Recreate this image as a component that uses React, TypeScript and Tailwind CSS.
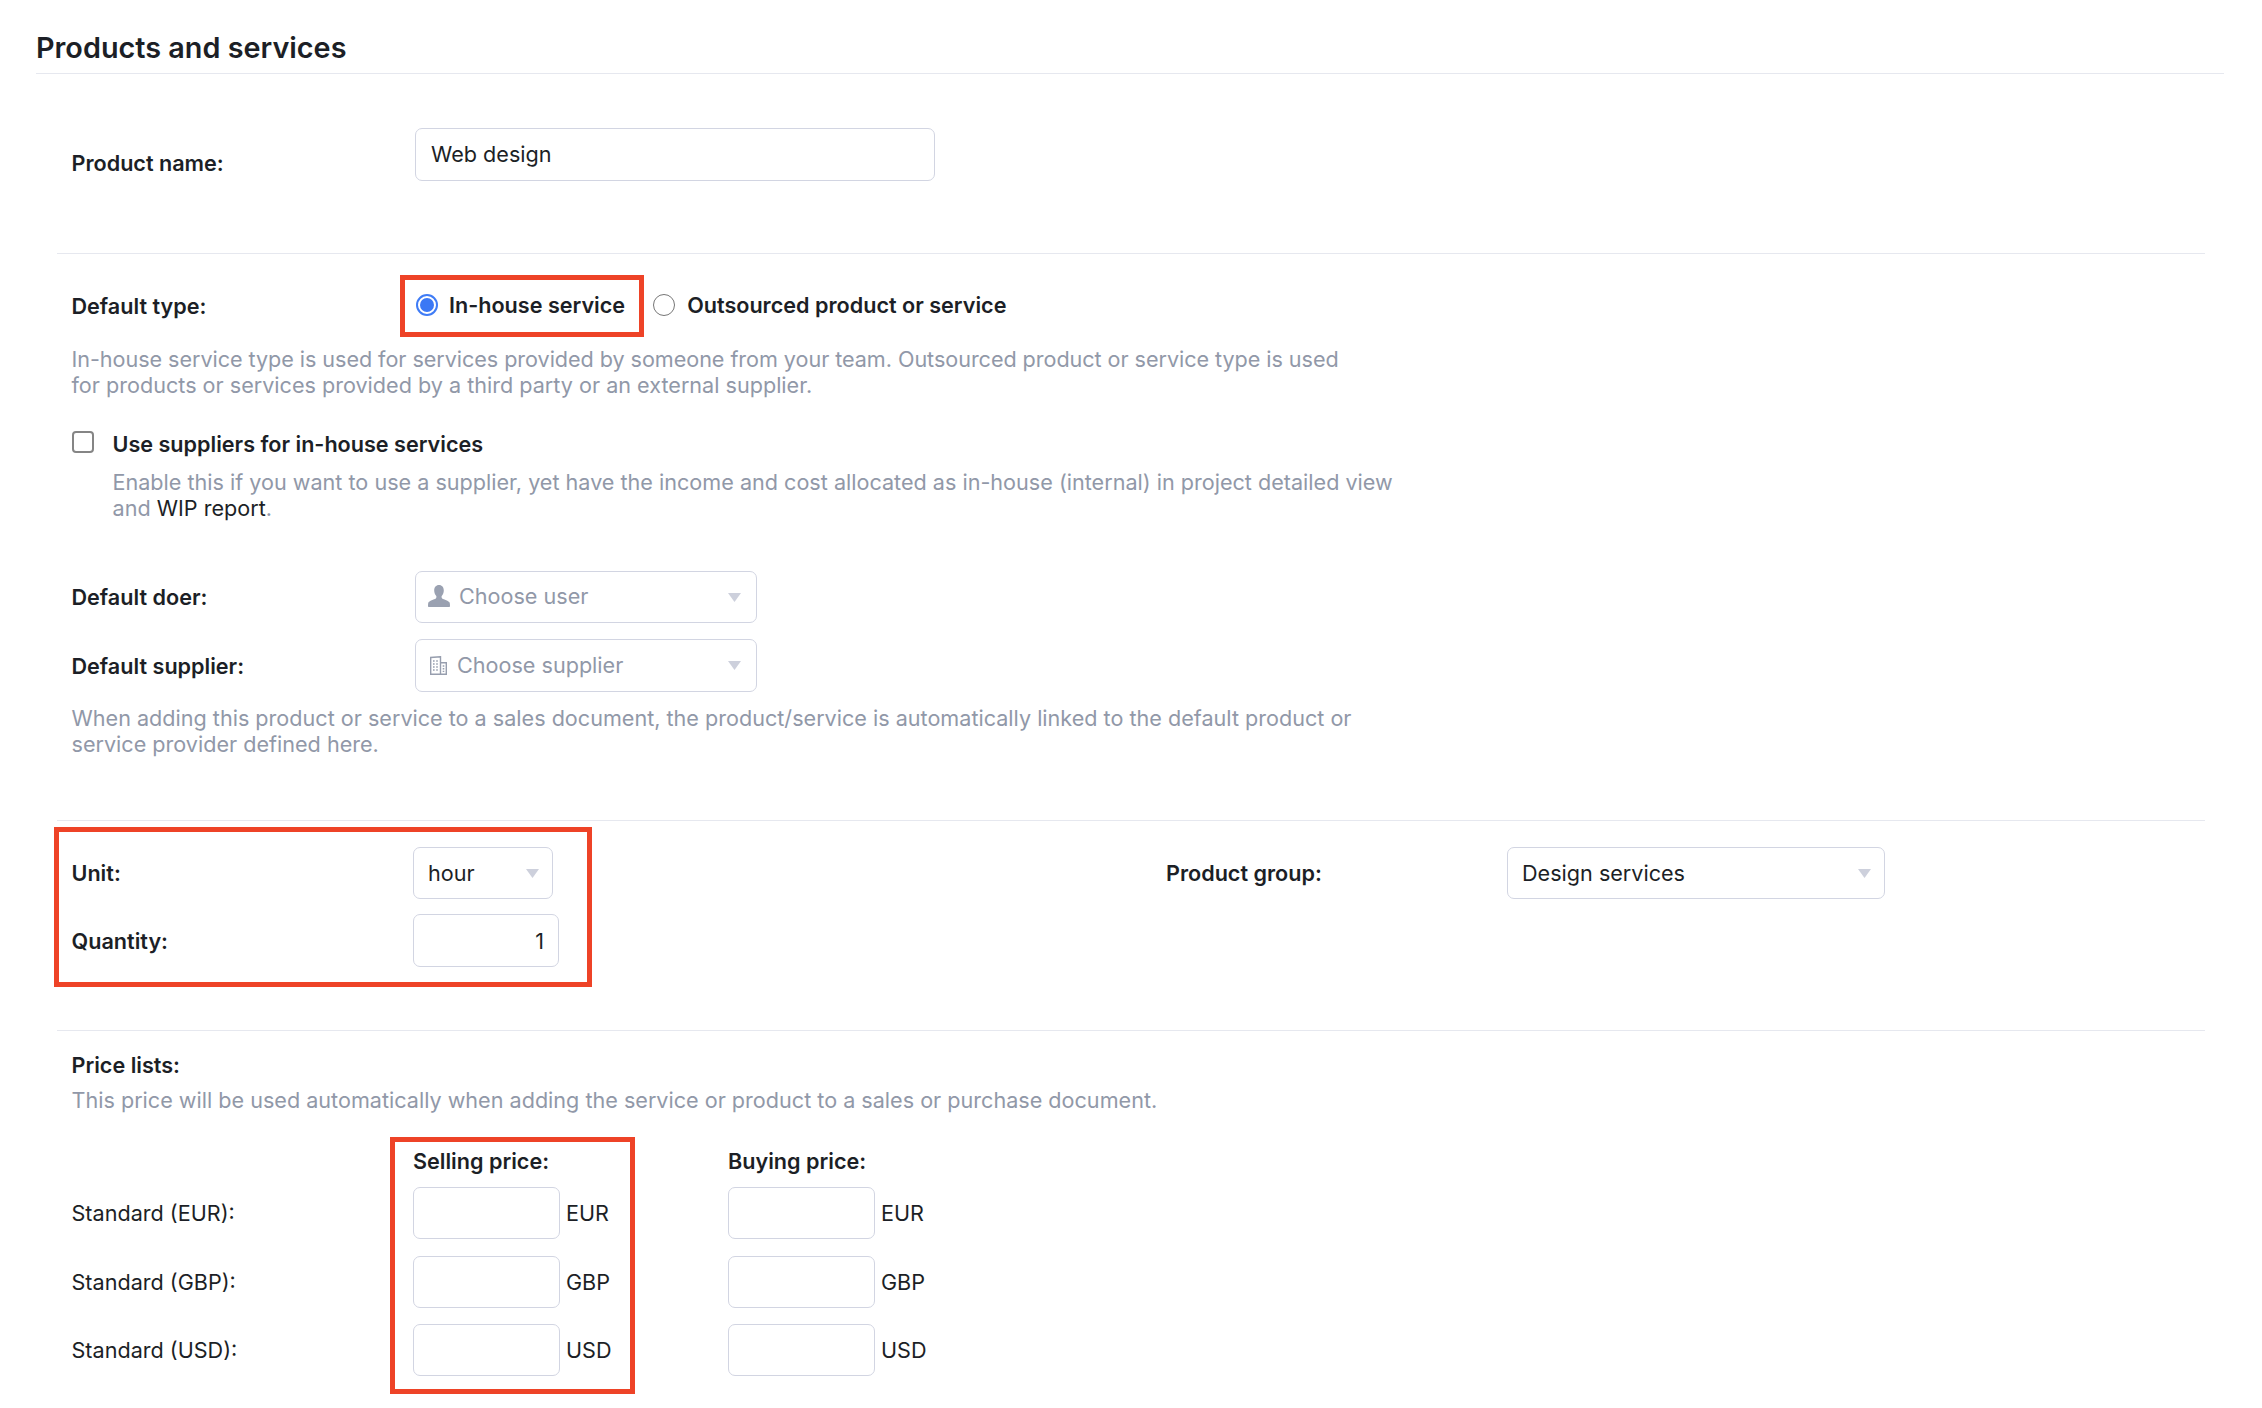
const labelClass = "font-semibold text-[21.6px] leading-[26px] text-[#1c1f26]";
const helpClass = "text-[21.6px] leading-[26px] text-[#9198a8]";
const fieldClass =
  "h-[52px] rounded-[7px] border-[1.5px] border-[#d2d5e2] bg-white text-[21.6px] text-[#1c1f26] outline-none";

const Caret = ({ className }: { className: string }) => (
  <svg viewBox="0 0 13 9" className={`h-[9px] w-[13px] shrink-0 ${className}`}>
    <path d="M0 0h13L6.5 9z" fill="#cdd0dc" />
  </svg>
);

const UserIcon = () => (
  <svg viewBox="0 0 22 22" className="h-[22px] w-[22px] shrink-0">
    <path
      d="M11 0c3 0 4.8 2.3 4.8 5.4 0 2.2-.8 4.2-1.9 5.4-.5.6-.5 2 .3 2.6 1.5 1.100 6.800 2.300 7.500 4.300.2.700.3 2.600.3 3.300 0 .6-.4 1-1 1H1c-.6 0-1-.4-1-1 0-.7.1-2.600.3-3.300.7-2 6-3.200 7.500-4.300.8-.6.8-2 .3-2.600C7 9.600 6.200 7.600 6.200 5.400 6.200 2.300 8 0 11 0z"
      fill="#9aa1b1"
    />
  </svg>
);

const BuildingIcon = () => (
  <svg viewBox="0 0 17 19" className="h-[19px] w-[17px] shrink-0" fill="none" stroke="#979eae" strokeWidth="1.4">
    <path d="M.7 18.300V1.500L10.500.7v17.600M10.500 6.700h5.800v11.600M0 18.300h17" />
    <path d="M3 5h1.600M6.200 5h1.600M3 8h1.600M6.200 8h1.600M3 11h1.600M6.200 11h1.600M3 14h1.600M6.200 14h1.600M12.700 10h1.600M12.700 12.700h1.600M12.700 15.400h1.600" />
  </svg>
);

const Select = ({
  className,
  caretClass,
  children,
}: {
  className: string;
  caretClass: string;
  children: React.ReactNode;
}) => (
  <div className={`${fieldClass} flex items-center justify-between ${className}`}>
    {children}
    <Caret className={caretClass} />
  </div>
);

const PriceInput = ({ currency }: { currency: string }) => (
  <div className="flex items-center gap-[6px]">
    <input readOnly className={`${fieldClass} w-[147px]`} />
    <span className="text-[21.6px] text-[#1c1f26]">{currency}</span>
  </div>
);

const App = () => {
  const rows = [
    { label: "Standard (EUR):", currency: "EUR", gap: "mt-0" },
    { label: "Standard (GBP):", currency: "GBP", gap: "mt-[17px]" },
    { label: "Standard (USD):", currency: "USD", gap: "mt-[16px]" },
  ];

  return (
    <div className="relative h-[1408px] w-[2262px] overflow-hidden bg-white font-['Inter',sans-serif]">
      {/* Page title */}
      <div className="ml-[36px] mr-[38px] h-[74px] border-b-[1.5px] border-[#e6e8ef] pt-[28px]">
        <h1 className="text-[28.8px] font-semibold leading-[40px] text-[#1c1f26]">Products and services</h1>
      </div>

      <div className="mx-[57px]">
        {/* Product name */}
        <section className="flex h-[180px] items-start border-b-[1.5px] border-[#e6e8ef] pl-[14.5px] pt-[54px]">
          <div className={`${labelClass} mt-[22px] w-[343.5px]`}>Product name:</div>
          <input
            readOnly
            value="Web design"
            className={`${fieldClass} h-[53px] w-[520px] pb-[2px] pl-[15px]`}
          />
        </section>

        {/* Default type, doer and supplier */}
        <section className="h-[567px] border-b-[1.5px] border-[#e6e8ef] pl-[14.5px] pt-[38px]">
          <div className="flex h-[26px] items-center">
            <div className={`${labelClass} mt-[2px] w-[343.5px]`}>Default type:</div>
            <div className="ml-[1px] flex items-center">
              <span className="flex h-[22px] w-[22px] items-center justify-center rounded-full border-2 border-[#3f7cf6]">
                <span className="h-[14px] w-[14px] rounded-full bg-[#3b78f5]" />
              </span>
              <span className={`${labelClass} ml-[11px]`}>In-house service</span>
              <span className="ml-[28px] h-[22px] w-[22px] rounded-full border-[1.5px] border-[#767676]" />
              <span className={`${labelClass} ml-[12px]`}>Outsourced product or service</span>
            </div>
          </div>

          <p className={`${helpClass} mt-[28px]`}>
            <span className="tracking-[-0.05px]">
              In-house service type is used for services provided by someone from your team. Outsourced product or service type is used
            </span>
            <br />
            for products or services provided by a third party or an external supplier.
          </p>

          <div className="mt-[33px] flex h-[26px] items-center">
            <span className="mb-[4px] h-[22px] w-[22px] rounded-[4px] border-2 border-[#858585]" />
            <span className={`${labelClass} ml-[19px]`}>Use suppliers for in-house services</span>
          </div>
          <p className={`${helpClass} ml-[41px] mt-[12px]`}>
            Enable this if you want to use a supplier, yet have the income and cost allocated as in-house (internal) in project detailed view
            <br />
            and <span className="text-[#1c1f26]">WIP report</span>.
          </p>

          <div className="mt-[50px] flex items-center">
            <div className={`${labelClass} w-[343.5px]`}>Default doer:</div>
            <Select className="w-[342px] pl-[12px]" caretClass="mr-[15px]">
              <span className="flex items-center gap-[9px] pb-[1px] text-[#9198a8]">
                <UserIcon />
                Choose user
              </span>
            </Select>
          </div>
          <div className="mt-[16px] flex items-center">
            <div className={`${labelClass} w-[343.5px]`}>Default supplier:</div>
            <Select className="h-[53px] w-[342px] pl-[14px]" caretClass="mr-[15px]">
              <span className="flex items-center gap-[10px] text-[#9198a8]">
                <BuildingIcon />
                Choose supplier
              </span>
            </Select>
          </div>

          <p className={`${helpClass} mt-[13px]`}>
            When adding this product or service to a sales document, the product/service is automatically linked to the default product or
            <br />
            service provider defined here.
          </p>
        </section>

        {/* Unit, quantity and product group */}
        <section className="flex h-[210px] items-start border-b-[1.5px] border-[#e6e8ef] pl-[14.5px] pt-[26px]">
          <div className="w-[1094.5px]">
            <div className="flex items-center">
              <div className={`${labelClass} w-[341.5px]`}>Unit:</div>
              <Select className="w-[140px] pl-[14px]" caretClass="mr-[13px]">
                hour
              </Select>
            </div>
            <div className="mt-[15px] flex items-center">
              <div className={`${labelClass} w-[341.5px]`}>Quantity:</div>
              <input
                readOnly
                value="1"
                className={`${fieldClass} h-[53px] w-[146px] pr-[14px] text-right`}
              />
            </div>
          </div>
          <div className="flex items-center">
            <div className={`${labelClass} w-[341px]`}>Product group:</div>
            <Select className="w-[378px] pl-[14px]" caretClass="mr-[13px]">
              Design services
            </Select>
          </div>
        </section>

        {/* Price lists */}
        <section className="pl-[14.5px] pt-[21px]">
          <div className={labelClass}>Price lists:</div>
          <p className={`${helpClass} mt-[9px]`}>
            This price will be used automatically when adding the service or product to a sales or purchase document.
          </p>

          <div className="mt-[35px] grid grid-cols-[341.5px_315px_auto] items-center">
            <div />
            <div className={`${labelClass} mb-[13px]`}>Selling price:</div>
            <div className={`${labelClass} mb-[13px]`}>Buying price:</div>
            {rows.map((row) => (
              <div key={row.currency} className="contents">
                <div className={`text-[21.6px] text-[#1c1f26] ${row.gap}`}>{row.label}</div>
                <div className={row.gap}>
                  <PriceInput currency={row.currency} />
                </div>
                <div className={row.gap}>
                  <PriceInput currency={row.currency} />
                </div>
              </div>
            ))}
          </div>
        </section>
      </div>

      {/* Red annotation boxes lying over the form */}
      <div className="pointer-events-none absolute left-[400px] top-[275px] h-[62px] w-[244px] border-[5px] border-[#ee4327]" />
      <div className="pointer-events-none absolute left-[54px] top-[827px] h-[160px] w-[538px] border-[5px] border-[#ee4327]" />
      <div className="pointer-events-none absolute left-[390px] top-[1137px] h-[257px] w-[245px] border-[5px] border-[#ee4327]" />
    </div>
  );
};

export default App;
